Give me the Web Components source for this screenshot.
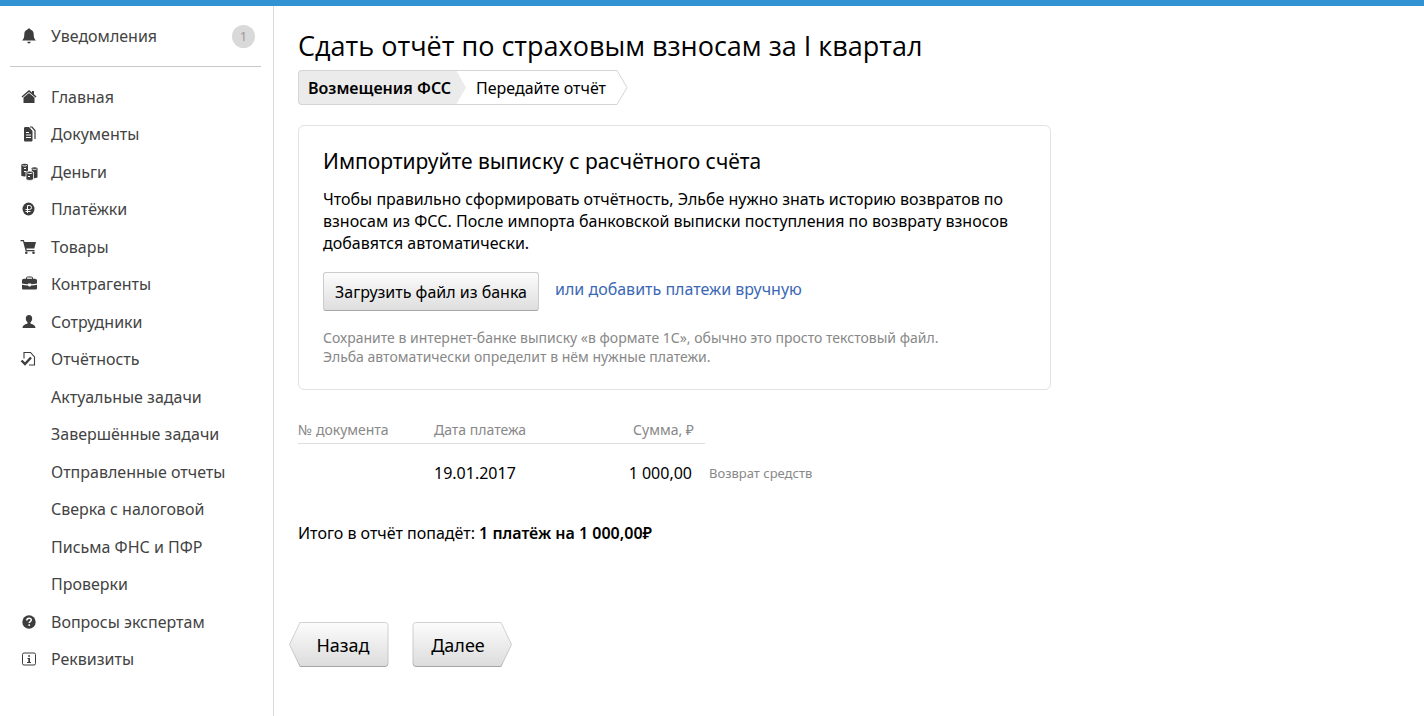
<!DOCTYPE html>
<html lang="ru">
<head>
<meta charset="utf-8">
<title>Сдать отчёт по страховым взносам</title>
<style>
  html { height: 100%; }
  body { margin: 0; min-height: 100%; background: #fff; color: #000; font: 16px/22px "Noto Sans", "Open Sans", sans-serif; }
</style>
</head>
<body>
<app-shell>
  <side-nav slot="nav"></side-nav>
  <report-page>
    <step-trail slot="steps"></step-trail>
    <import-panel></import-panel>
    <payments-list></payments-list>
    <arrow-button slot="actions" direction="back">Назад</arrow-button>
    <arrow-button slot="actions" direction="next">Далее</arrow-button>
  </report-page>
</app-shell>

<script>
const define = (name, html) => customElements.define(name, class extends HTMLElement {
  constructor() {
    super();
    this.attachShadow({ mode: 'open' }).innerHTML = html(this);
  }
});

define('app-shell', () => `
  <style>
    :host { display: flex; flex-direction: column; min-height: 100vh; }
    .bar { height: 6px; background: #3193d1; }
    .body { flex: 1; display: grid; grid-template-columns: 274px 1fr; }
    aside { border-right: 1px solid #d9d9d9; }
    main { padding: 22px 24px 0; }
  </style>
  <div class="bar"></div>
  <div class="body">
    <aside><slot name="nav"></slot></aside>
    <main><slot></slot></main>
  </div>`);

const icons = {
  bell: '<path d="M9 1.500c.8 0 1.300.4 1.400 1 2.200.6 3.300 2.300 3.300 4.700 0 3 .6 4.800 2.200 6.300H2.100c1.600-1.500 2.200-3.300 2.200-6.300 0-2.400 1.100-4.100 3.300-4.700.1-.6.6-1 1.400-1zM7.300 14.800h3.400a1.700 1.700 0 0 1-3.400 0z"/>',
  home: '<path d="M9 2 1.500 8.400l.9 1L9 3.900l6.600 5.500.9-1L14 6.200V3h-2v1.500zM9 5 3.500 9.600V15h11V9.600z"/>',
  docs: '<path fill-rule="evenodd" d="M4 3.500C4 2.500 4.500 2 5.500 2H9l3.500 4v9c0 1-.5 1.500-1.500 1.500H5.500c-1 0-1.500-.5-1.500-1.500zM6 7h3v1H6zm0 2.500h5v1H6zm0 2.500h5v1H6z"/><path d="M10 2h2l3 3.500v8.500" fill="none" stroke="currentColor" stroke-width="1.200"/>',
  coins: '<path d="M1.300 1.600C3 .5 6.300.5 8 1.600v11.200c-1.700.9-5 .9-6.700 0zM11.500 5c1.500-.9 4.500-.9 6 0v9.500c-1.500.8-3 .9-4.500.7z"/><g fill="none" stroke="#fff"><path d="M2.500 2.500c1.500.7 3 .7 4.300 0M4 5.500h2M4 8.500h2M12.500 6c1.300.6 2.800.6 4 0"/></g><path d="M6 9c2-1.200 5.500-1.200 7.500 0v7.500c-2 1.200-5.500 1.200-7.500 0z" stroke="#fff" stroke-width=".8"/><path d="M7.300 10c1.600.8 3.400.8 5 0M8 13.500h2" fill="none" stroke="#fff"/>',
  ruble: '<ellipse cx="8.500" cy="9" rx="6" ry="6.500"/><path d="M7.500 13V5.500h2a2 2 0 0 1 0 4H5.500M5.500 11.500h5" fill="none" stroke="#fff"/>',
  cart: '<path d="M.5 2h3.300l.7 2H16l-1.700 6.500H6.300l.4 1.500h7.800v1.200H5.700L3 3.200H.5z"/><circle cx="6.300" cy="14.700" r="1.300"/><circle cx="13.500" cy="14.700" r="1.300"/>',
  bag: '<path d="M6.500 4V3c0-.7.400-1 1-1h4c.6 0 1 .3 1 1v1" fill="none" stroke="currentColor"/><path d="M4 3.800h11c1.300 0 2 .8 2 2v2.700c-2 .5-4 .8-5.800.8v-.8H8v.8C6 9.300 4 9 2 8.500V5.800c0-1.200.7-2 2-2zM2 9.800c2 .5 4 .7 6 .7l.8.900h1.500l.8-.9c2 0 4-.2 5.900-.7V13c0 1-.5 1.500-1.500 1.500h-12C2.500 14.500 2 14 2 13z"/>',
  person: '<path d="M9 2c2 0 3.200 1.400 3.200 3.300 0 1.800-.7 3.200-1.700 4v1.200c1 .7 5 1.200 5 4.500h-13c0-3.300 4-3.800 5-4.500V9.300c-1-.8-1.700-2.200-1.700-4C5.800 3.400 7 2 9 2z"/>',
  report: '<path d="M4 8.500v-6h6.500L14.500 7v8H9" fill="none" stroke="currentColor" stroke-width="1.100"/><path d="m1.500 10.500 3.500 3.500 6-6.500" fill="none" stroke="currentColor" stroke-width="2.400"/>',
  question: '<circle cx="9" cy="9" r="6.700"/><path d="M6.800 7.500c0-3 4.500-2.900 4.500-.4 0 1.500-2.100 1.500-2.100 3M9.200 11.300v1.700" fill="none" stroke="#fff" stroke-width="1.500"/>',
  info: '<rect x="2.500" y="3" width="13" height="12" rx="1.500" fill="none" stroke="currentColor"/><path d="M8.200 5.200h1.800v1.500H8.200zM7.500 8h2.500v4h1v1H7v-1h1.300V9h-.8z"/>'
};

define('nav-icon', el => `
  <style>
    :host { display: block; color: #3d3d3d; }
    svg { display: block; }
  </style>
  <svg width="18" height="18" viewBox="0 0 18 18" fill="currentColor" aria-hidden="true">${icons[el.getAttribute('name')] || ''}</svg>`);

define('nav-link', el => `
  <style>
    :host { display: block; }
    a { display: grid; grid-template-columns: 18px 1fr auto; column-gap: 13px; align-items: center; padding-left: 20px; color: #434343; text-decoration: none; }
    ::slotted([slot=badge]) { width: 23px; height: 23px; margin-right: 18px; border-radius: 50%; background: #d9d9d9; color: #999; font-size: 13px; line-height: 23px; text-align: center; }
  </style>
  <a href="#">
    ${el.getAttribute('icon') ? `<nav-icon name="${el.getAttribute('icon')}"></nav-icon>` : '<span></span>'}
    <span><slot></slot></span><slot name="badge"></slot>
  </a>`);

const menu = [
  ['home', 'Главная'], ['docs', 'Документы'], ['coins', 'Деньги'], ['ruble', 'Платёжки'],
  ['cart', 'Товары'], ['bag', 'Контрагенты'], ['person', 'Сотрудники'], ['report', 'Отчётность'],
  ['', 'Актуальные задачи'], ['', 'Завершённые задачи'], ['', 'Отправленные отчеты'],
  ['', 'Сверка с налоговой'], ['', 'Письма ФНС и ПФР'], ['', 'Проверки'],
  ['question', 'Вопросы экспертам'], ['info', 'Реквизиты']
];

define('side-nav', () => `
  <style>
    :host { display: block; }
    .top { display: grid; align-items: center; height: 60px; }
    hr { margin: 0 12px 0 10px; border: 0; border-top: 1px solid #c8c8c8; }
    ul { display: grid; grid-auto-rows: 1fr; align-items: center; height: 600px; margin: 11px 0 0; padding: 0; list-style: none; }
  </style>
  <nav>
    <div class="top"><nav-link icon="bell">Уведомления<span slot="badge">1</span></nav-link></div>
    <hr>
    <ul>${menu.map(([icon, text]) => `<li><nav-link icon="${icon}">${text}</nav-link></li>`).join('')}</ul>
  </nav>`);

define('report-page', () => `
  <style>
    :host { display: block; max-width: 753px; }
    h1 { margin: 0 0 6px; font: 400 27px/36px "Open Sans", "Noto Sans", sans-serif; }
    .actions { display: flex; gap: 23px; margin: 78px 0 0 -9px; padding-bottom: 24px; }
  </style>
  <h1>Сдать отчёт по страховым взносам за I квартал</h1>
  <slot name="steps"></slot>
  <slot></slot>
  <div class="actions"><slot name="actions"></slot></div>`);

define('step-trail', () => `
  <style>
    :host { display: block; }
    ol { display: flex; margin: 0; padding: 0; list-style: none; line-height: 34px; }
    li { display: flex; }
    span { box-sizing: border-box; height: 35px; border: solid #d5d5d5; border-width: 1px 0; white-space: nowrap; }
    .done span { width: 158px; padding-left: 9px; border-left-width: 1px; border-radius: 4px 0 0 4px; background: #ebebeb; font-weight: 600; }
    .next span { width: 151px; padding-left: 10px; }
    svg { display: block; }
  </style>
  <ol>
    <li class="done"><span>Возмещения ФСС</span><svg width="10" height="35"><path d="M0 0 10 17.500 0 35z" fill="#ebebeb"/><path d="M0 .5H10M0 34.500H10" stroke="#d5d5d5"/></svg></li>
    <li class="next"><span>Передайте отчёт</span><svg width="11" height="35"><path d="M0 .5 10 17.500 0 34.500" fill="none" stroke="#d5d5d5"/></svg></li>
  </ol>`);

define('import-panel', () => `
  <style>
    :host { display: block; margin-top: 20px; padding: 22px 24px 23px; border: 1px solid #e2e2e2; border-radius: 6px; }
    h2 { margin: 0 0 14px; font-size: 21px; line-height: 26px; font-weight: 400; }
    p { margin: 0; }
    .row { display: flex; align-items: center; gap: 16px; margin: 18px 0 17px; }
    button { height: 39px; padding: 0 11px; border: 1px solid #ccc; border-bottom-color: #a6a6a6; border-radius: 3px; background: linear-gradient(#fcfcfc, #dedede); color: #000; font: inherit; }
    a { padding-bottom: 5px; color: #3b68b5; text-decoration: none; }
    .hint { color: #888; font-size: 14px; line-height: 19px; }
  </style>
  <h2>Импортируйте выписку с расчётного счёта</h2>
  <p>Чтобы правильно сформировать отчётность, Эльбе нужно знать историю возвратов по взносам из ФСС. После импорта банковской выписки поступления по возврату взносов добавятся автоматически.</p>
  <div class="row"><button type="button">Загрузить файл из банка</button><a href="#">или добавить платежи вручную</a></div>
  <p class="hint">Сохраните в интернет-банке выписку «в формате 1С», обычно это просто текстовый файл.<br>Эльба автоматически определит в нём нужные платежи.</p>`);

define('payments-list', () => `
  <style>
    :host { display: block; margin-top: 29px; }
    table { border-collapse: collapse; table-layout: fixed; width: 557px; }
    th, td { padding: 0; text-align: left; font-weight: 400; white-space: nowrap; }
    th { height: 24px; vertical-align: top; color: #888; font-size: 14px; }
    th:not(:last-child) { border-bottom: 1px solid #dedede; }
    td { height: 58px; }
    .sum { padding-right: 11px; text-align: right; }
    td.sum { padding-right: 13px; }
    .note { padding-left: 4px; color: #888; font-size: 13px; }
    p { margin: 20px 0 0; }
    strong { font-weight: 600; }
  </style>
  <table>
    <colgroup><col style="width:136px"><col style="width:136px"><col style="width:135px"><col></colgroup>
    <thead><tr><th>№ документа</th><th>Дата платежа</th><th class="sum">Сумма, ₽</th><th></th></tr></thead>
    <tbody><tr><td></td><td>19.01.2017</td><td class="sum">1 000,00</td><td class="note">Возврат средств</td></tr></tbody>
  </table>
  <p>Итого в отчёт попадёт: <strong>1 платёж на 1 000,00₽</strong></p>`);

define('arrow-button', el => {
  const back = el.getAttribute('direction') === 'back';
  const d = back
    ? 'M11 .5H96a3 3 0 0 1 3 3V41.500a3 3 0 0 1-3 3H11L.5 22.500z'
    : 'M89 .5H4a3 3 0 0 0-3 3V41.500a3 3 0 0 0 3 3H89L99.500 22.500z';
  return `
  <style>
    :host { display: block; }
    button { display: grid; place-items: center; width: 100px; height: 45px; padding: 0; border: 0; background: none; color: #000; font: inherit; font-size: 18px; }
    svg, span { grid-area: 1 / 1; }
    span { padding-${back ? 'left: 8px' : 'right: 8px'}; }
  </style>
  <button type="button">
    <svg width="100" height="45" aria-hidden="true">
      <defs>
        <linearGradient id="f" x2="0" y2="1"><stop stop-color="#fcfcfc"/><stop offset="1" stop-color="#dcdcdc"/></linearGradient>
        <linearGradient id="s" x2="0" y2="1"><stop stop-color="#d2d2d2"/><stop offset=".9" stop-color="#c4c4c4"/><stop offset="1" stop-color="#a6a6a6"/></linearGradient>
      </defs>
      <path d="${d}" fill="url(#f)" stroke="url(#s)"/>
    </svg>
    <span><slot></slot></span>
  </button>`;
});
</script>
</body>
</html>
